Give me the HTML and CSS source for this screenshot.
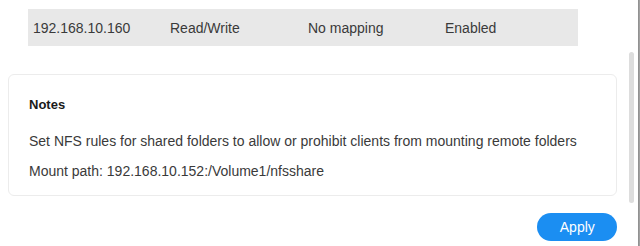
FILE: index.html
```html
<!DOCTYPE html>
<html>
<head>
<meta charset="utf-8">
<link rel="stylesheet" href="styles.css">
</head>
<body>
<div class="window">
  <div class="content">
    <div class="table-area">
      <div class="row">
        <span class="cell c1">192.168.10.160</span>
        <span class="cell c2">Read/Write</span>
        <span class="cell c3">No mapping</span>
        <span class="cell c4">Enabled</span>
      </div>
    </div>
    <div class="notes">
      <div class="notes-title">Notes</div>
      <p class="notes-text">Set NFS rules for shared folders to allow or prohibit clients from mounting remote folders</p>
      <p class="notes-text">Mount path: 192.168.10.152:/Volume1/nfsshare</p>
    </div>
    <div class="footer">
      <button class="apply">Apply</button>
    </div>
  </div>
  <div class="scrolltrack"><div class="thumb"></div></div>
  <div class="edge"></div>
</div>
</body>
</html>
```
FILE: styles.css
```css
html, body {
  margin: 0;
  padding: 0;
  background: #ffffff;
}
body {
  width: 640px;
  height: 246px;
  overflow: hidden;
  font-family: "Liberation Sans", Arial, sans-serif;
  color: #333333;
}
.window {
  display: flex;
  width: 640px;
  height: 246px;
}
.content {
  width: 617px;
  padding-left: 8px;
  display: flex;
  flex-direction: column;
}
.table-area {
  padding: 9px 39px 0 20px;
}
.row {
  display: flex;
  align-items: center;
  height: 37px;
  background: #e8e8e8;
  font-size: 14px;
  color: #3a3a3a;
}
.cell { white-space: nowrap; }
.c1 { width: 137px; padding-left: 5px; }
.c2 { width: 138px; }
.c3 { width: 137px; }
.c4 { flex: 1; }
.notes {
  margin-top: 28px;
  height: 122px;
  box-sizing: border-box;
  border: 1px solid #ececec;
  border-radius: 6px;
  padding: 22px 20px 0 20px;
}
.notes-title {
  font-size: 13px;
  font-weight: bold;
  color: #1a1a1a;
  line-height: 16px;
}
.notes-text {
  margin: 20px 0 0 0;
  font-size: 14px;
  line-height: 16px;
  color: #3a3a3a;
  white-space: nowrap;
}
.notes-text + .notes-text {
  margin-top: 14px;
}
.footer {
  display: flex;
  justify-content: flex-end;
  margin-top: 17px;
}
.apply {
  width: 80px;
  height: 28px;
  border: none;
  border-radius: 14px;
  background: #1b8ef2;
  color: #ffffff;
  font-family: "Liberation Sans", Arial, sans-serif;
  font-size: 14px;
  padding: 0;
}
.scrolltrack {
  width: 21px;
  position: relative;
}
.thumb {
  position: absolute;
  left: 12px;
  top: 52px;
  width: 5px;
  height: 151px;
  border-radius: 3px;
  background: #dddddd;
}
.edge {
  width: 2px;
  background: linear-gradient(to right, #8a8a8a, #a8a8a8);
}
```
